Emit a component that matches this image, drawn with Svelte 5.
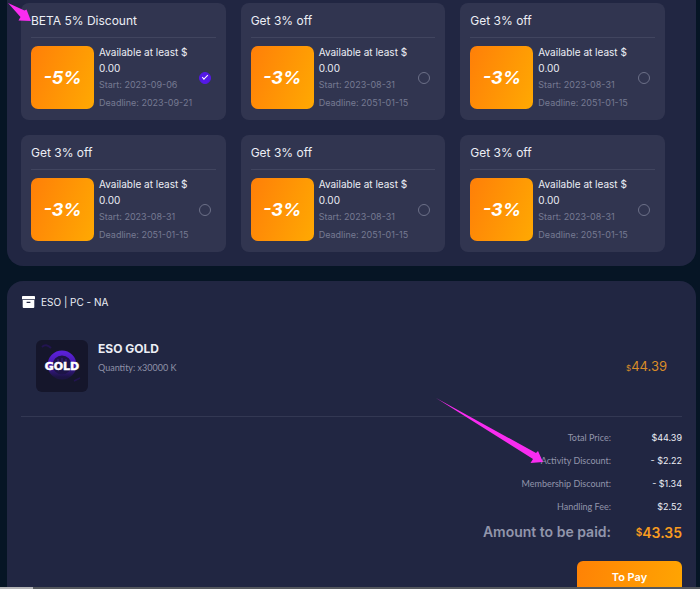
<script>
  const coupons = [
    { id: 1, title: 'BETA 5% Discount', off: '-5%', start: '2023-09-06', end: '2023-09-21' },
    { id: 2, title: 'Get 3% off', off: '-3%', start: '2023-08-31', end: '2051-01-15' },
    { id: 3, title: 'Get 3% off', off: '-3%', start: '2023-08-31', end: '2051-01-15' },
    { id: 4, title: 'Get 3% off', off: '-3%', start: '2023-08-31', end: '2051-01-15' },
    { id: 5, title: 'Get 3% off', off: '-3%', start: '2023-08-31', end: '2051-01-15' },
    { id: 6, title: 'Get 3% off', off: '-3%', start: '2023-08-31', end: '2051-01-15' }
  ];
  const rows = [
    ['Total Price:', '$44.39'],
    ['Activity Discount:', '- $2.22'],
    ['Membership Discount:', '- $1.34'],
    ['Handling Fee:', '$2.52']
  ];
  let selected = $state(1);
</script>

<div class="page">
  <section class="panel coupons">
    {#each coupons as c (c.id)}
      <label class="card">
        <span class="title">{c.title}</span>
        <span class="body">
          <span class="tile">{c.off}</span>
          <span class="info">
            <span class="avail">Available at least $ 0.00</span>
            <span class="date">Start: {c.start}</span>
            <span class="date">Deadline: {c.end}</span>
          </span>
          <input type="radio" name="coupon" value={c.id} bind:group={selected} />
        </span>
      </label>
    {/each}
  </section>

  <section class="panel order">
    <header>
      <svg width="13" height="12" viewBox="0 0 13 12" aria-hidden="true">
        <path fill="#fff" fill-rule="evenodd" d="M0.8 0h11.4q.8 0 .8.8v2.4H0V.8Q0 0 .8 0zM.7 4.1h11.6v6.9q0 1-1 1H1.7q-1 0-1-1zM4.6 5.8v1.3h3.8V5.8z" />
      </svg>
      <span>ESO | PC - NA</span>
    </header>
    <div class="product">
      <svg class="thumb" width="52" height="52" viewBox="0 0 52 52" role="img" aria-label="Gold">
        <defs>
          <linearGradient id="ring" x1="0" y1="0" x2="0" y2="1">
            <stop offset="0" stop-color="#5a20d8" />
            <stop offset="0.5" stop-color="#4318a8" />
            <stop offset="1" stop-color="#1c1444" />
          </linearGradient>
        </defs>
        <rect width="52" height="52" rx="6" fill="#15162b" />
        <path d="M6 7q4-4 9 1" fill="none" stroke="#221450" stroke-width="2" />
        <circle cx="26" cy="25" r="12" fill="#1d1448" stroke="url(#ring)" stroke-width="5" />
        <path d="M22 19v3M26 18v4M30 19v3" stroke="#3d1b8c" stroke-width="1" />
        <path d="M38 41l6-3" stroke="#221450" stroke-width="1.5" />
        <text x="26" y="30" text-anchor="middle">GOLD</text>
      </svg>
      <div class="desc">
        <h2>ESO GOLD</h2>
        <p>Quantity: x30000 K</p>
      </div>
      <div class="price"><small>$</small>44.39</div>
    </div>
    <dl>
      {#each rows as [name, value]}
        <div class="row"><dt>{name}</dt><dd>{value}</dd></div>
      {/each}
      <div class="row total"><dt>Amount to be paid:</dt><dd><small>$</small>43.35</dd></div>
    </dl>
    <button type="button">To Pay</button>
  </section>

  <div class="edge"></div>
  <svg class="arrow first" width="24" height="20" viewBox="0 0 24 20" aria-hidden="true">
    <path fill="#f92cf0" d="M0 0L16.500 7.500 18.500 6.500 23 18 10.500 17.500 12.500 14z" />
  </svg>
  <svg class="arrow second" width="108" height="66" viewBox="0 0 108 66" aria-hidden="true">
    <path fill="#f92cf0" d="M0 0L100 55 102 53 107 64 94.500 65 97 61z" />
  </svg>
</div>

<style>
  :global(body) {
    background: #061525;
  }
  .page {
    position: relative;
    height: 100vh;
    overflow: hidden;
    box-sizing: border-box;
    padding: 0 4px 0 7px;
    background: #061525;
    color: #eceef5;
    font-family: Inter, "Open Sans", sans-serif;
    font-size: 10px;
  }
  .panel {
    background: #212642;
  }
  .coupons {
    display: grid;
    grid-template-columns: repeat(3, minmax(0, 1fr));
    gap: 15px;
    padding: 3px 31px 14px 14px;
    border-radius: 0 0 16px 16px;
  }
  .card {
    display: block;
    padding: 0 10px 11px;
    border-radius: 8px;
    background: #313550;
  }
  .title {
    display: block;
    height: 34px;
    line-height: 35px;
    border-bottom: 1px solid #41455f;
    font-size: 12px;
    white-space: nowrap;
  }
  .body {
    display: flex;
    align-items: center;
    height: 63px;
    padding-top: 8px;
  }
  .tile {
    flex: none;
    width: 63px;
    height: 63px;
    border-radius: 7px;
    background: linear-gradient(110deg, #ff7f08, #ffa902);
    color: #fff;
    font-size: 18px;
    font-weight: 700;
    font-style: italic;
    line-height: 63px;
    text-align: center;
  }
  .info {
    flex: 1;
    min-width: 0;
    padding-left: 5px;
  }
  .avail {
    display: block;
    max-width: 90px;
    line-height: 16px;
  }
  .date {
    display: block;
    color: #767a92;
    font-size: 9px;
    line-height: 18px;
    white-space: nowrap;
  }
  input {
    appearance: none;
    flex: none;
    position: relative;
    box-sizing: border-box;
    width: 12px;
    height: 12px;
    margin: 0 5px 0 0;
    border: 1px solid #6c7088;
    border-radius: 50%;
  }
  input:checked {
    border-color: #5419e6;
    background: #5419e6;
  }
  input:checked::after {
    content: "";
    position: absolute;
    left: 2px;
    top: 2px;
    width: 5px;
    height: 2px;
    border: solid #fff;
    border-width: 0 0 1px 1px;
    transform: rotate(-45deg);
  }
  .order {
    margin-top: 15px;
    padding: 12px 14px 16px;
    border-radius: 16px 16px 0 0;
  }
  header {
    display: flex;
    align-items: center;
    gap: 6px;
    height: 18px;
    padding-left: 1px;
  }
  .product {
    display: flex;
    align-items: center;
    padding: 29px 15px 24px;
    border-bottom: 1px solid #333853;
  }
  .thumb text {
    font-family: "DejaVu Sans", sans-serif;
    font-size: 11px;
    font-weight: 700;
    fill: #fff;
    stroke: #fff;
    stroke-width: 0.5px;
  }
  .desc {
    flex: 1;
    align-self: flex-start;
    padding-left: 10px;
  }
  h2 {
    margin: 0;
    font-size: 12px;
    font-weight: 700;
    line-height: 18px;
  }
  p {
    margin: 0;
    color: #8e92a8;
    font-family: Lato, sans-serif;
    font-size: 9px;
    line-height: 20px;
  }
  .price {
    color: #d98c28;
    font-size: 13px;
  }
  small {
    font-size: 8px;
  }
  dl {
    margin: 0;
    padding-top: 9px;
  }
  .row {
    display: flex;
    justify-content: flex-end;
    line-height: 23px;
  }
  dt {
    color: #9195ab;
    font-family: Lato, sans-serif;
    font-size: 9px;
  }
  dd {
    width: 71px;
    margin: 0;
    font-size: 9px;
    text-align: right;
  }
  .total {
    line-height: 28px;
    font-weight: 600;
  }
  .total dt {
    font-family: inherit;
    font-size: 14px;
  }
  .total dd {
    color: #f79b20;
    font-size: 14px;
  }
  .total small {
    font-size: 10px;
    vertical-align: 2px;
  }
  button {
    display: block;
    width: 105px;
    height: 32px;
    margin: 14px 0 0 auto;
    padding: 0;
    border: 0;
    border-radius: 6px;
    background: linear-gradient(100deg, #ff8205, #ffa502);
    color: #fff;
    font: 600 11px Inter, "Open Sans", sans-serif;
  }
  .edge {
    position: absolute;
    left: 0;
    right: 0;
    bottom: 0;
    height: 2px;
    background: linear-gradient(90deg, #b5b5b7 33px, #55585d 33px);
  }
  .arrow {
    position: absolute;
    pointer-events: none;
  }
  .first {
    left: 8px;
    top: 3px;
  }
  .second {
    left: 436px;
    top: 398px;
  }
</style>
